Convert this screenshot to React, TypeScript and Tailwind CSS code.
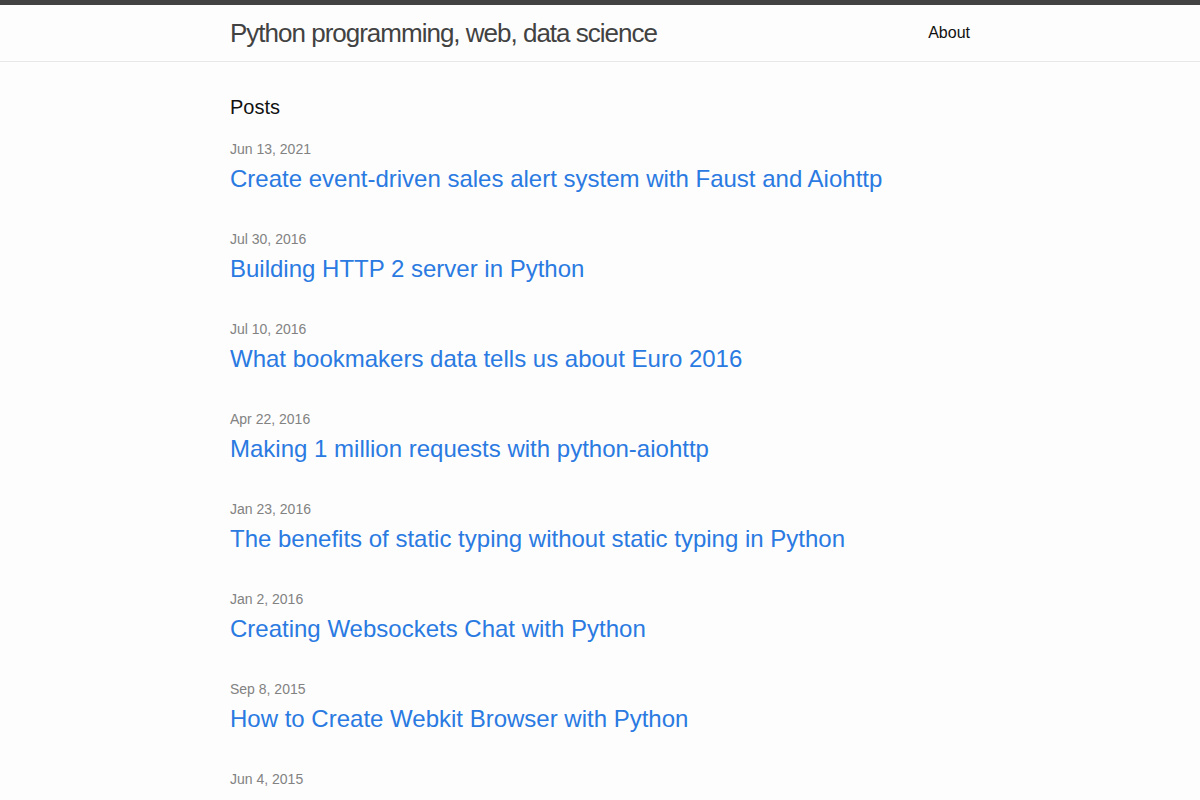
import React from 'react';

const posts = [
  { date: 'Jun 13, 2021', title: 'Create event-driven sales alert system with Faust and Aiohttp' },
  { date: 'Jul 30, 2016', title: 'Building HTTP 2 server in Python' },
  { date: 'Jul 10, 2016', title: 'What bookmakers data tells us about Euro 2016' },
  { date: 'Apr 22, 2016', title: 'Making 1 million requests with python-aiohttp' },
  { date: 'Jan 23, 2016', title: 'The benefits of static typing without static typing in Python' },
  { date: 'Jan 2, 2016', title: 'Creating Websockets Chat with Python' },
  { date: 'Sep 8, 2015', title: 'How to Create Webkit Browser with Python' },
  { date: 'Jun 4, 2015', title: 'Scraping with Python and asyncio' },
];

const App = () => {
  return (
    <div
      className="min-h-screen bg-[#fdfdfd] text-[#111] text-base leading-6"
      style={{ fontFamily: '"Liberation Sans", Arial, sans-serif' }}
    >
      <header className="border-t-[5px] border-t-[#424242] border-b border-b-[#e8e8e8] min-h-[56px]">
        <div className="max-w-[740px] mx-auto px-[30px] box-content flex justify-between items-center">
          <a href="#" className="text-[26px] leading-[56px] tracking-[-1px] text-[#424242] font-light">
            Python programming, web, data science
          </a>
          <nav>
            <a href="#" className="text-[#111] leading-[56px]">About</a>
          </nav>
        </div>
      </header>

      <main className="py-[30px]">
        <div className="max-w-[740px] mx-auto px-[30px] box-content">
          <h2 className="text-[20px] leading-[30px] mb-[15px]">Posts</h2>
          <ul>
            {posts.map((post) => (
              <li key={post.date} className="mb-[30px]">
                <span className="text-[14px] text-[#828282]">{post.date}</span>
                <h2 className="text-[24px] leading-9">
                  <a href="#" className="text-[#2a7ae2]">{post.title}</a>
                </h2>
              </li>
            ))}
          </ul>
        </div>
      </main>
    </div>
  );
};

export default App;
